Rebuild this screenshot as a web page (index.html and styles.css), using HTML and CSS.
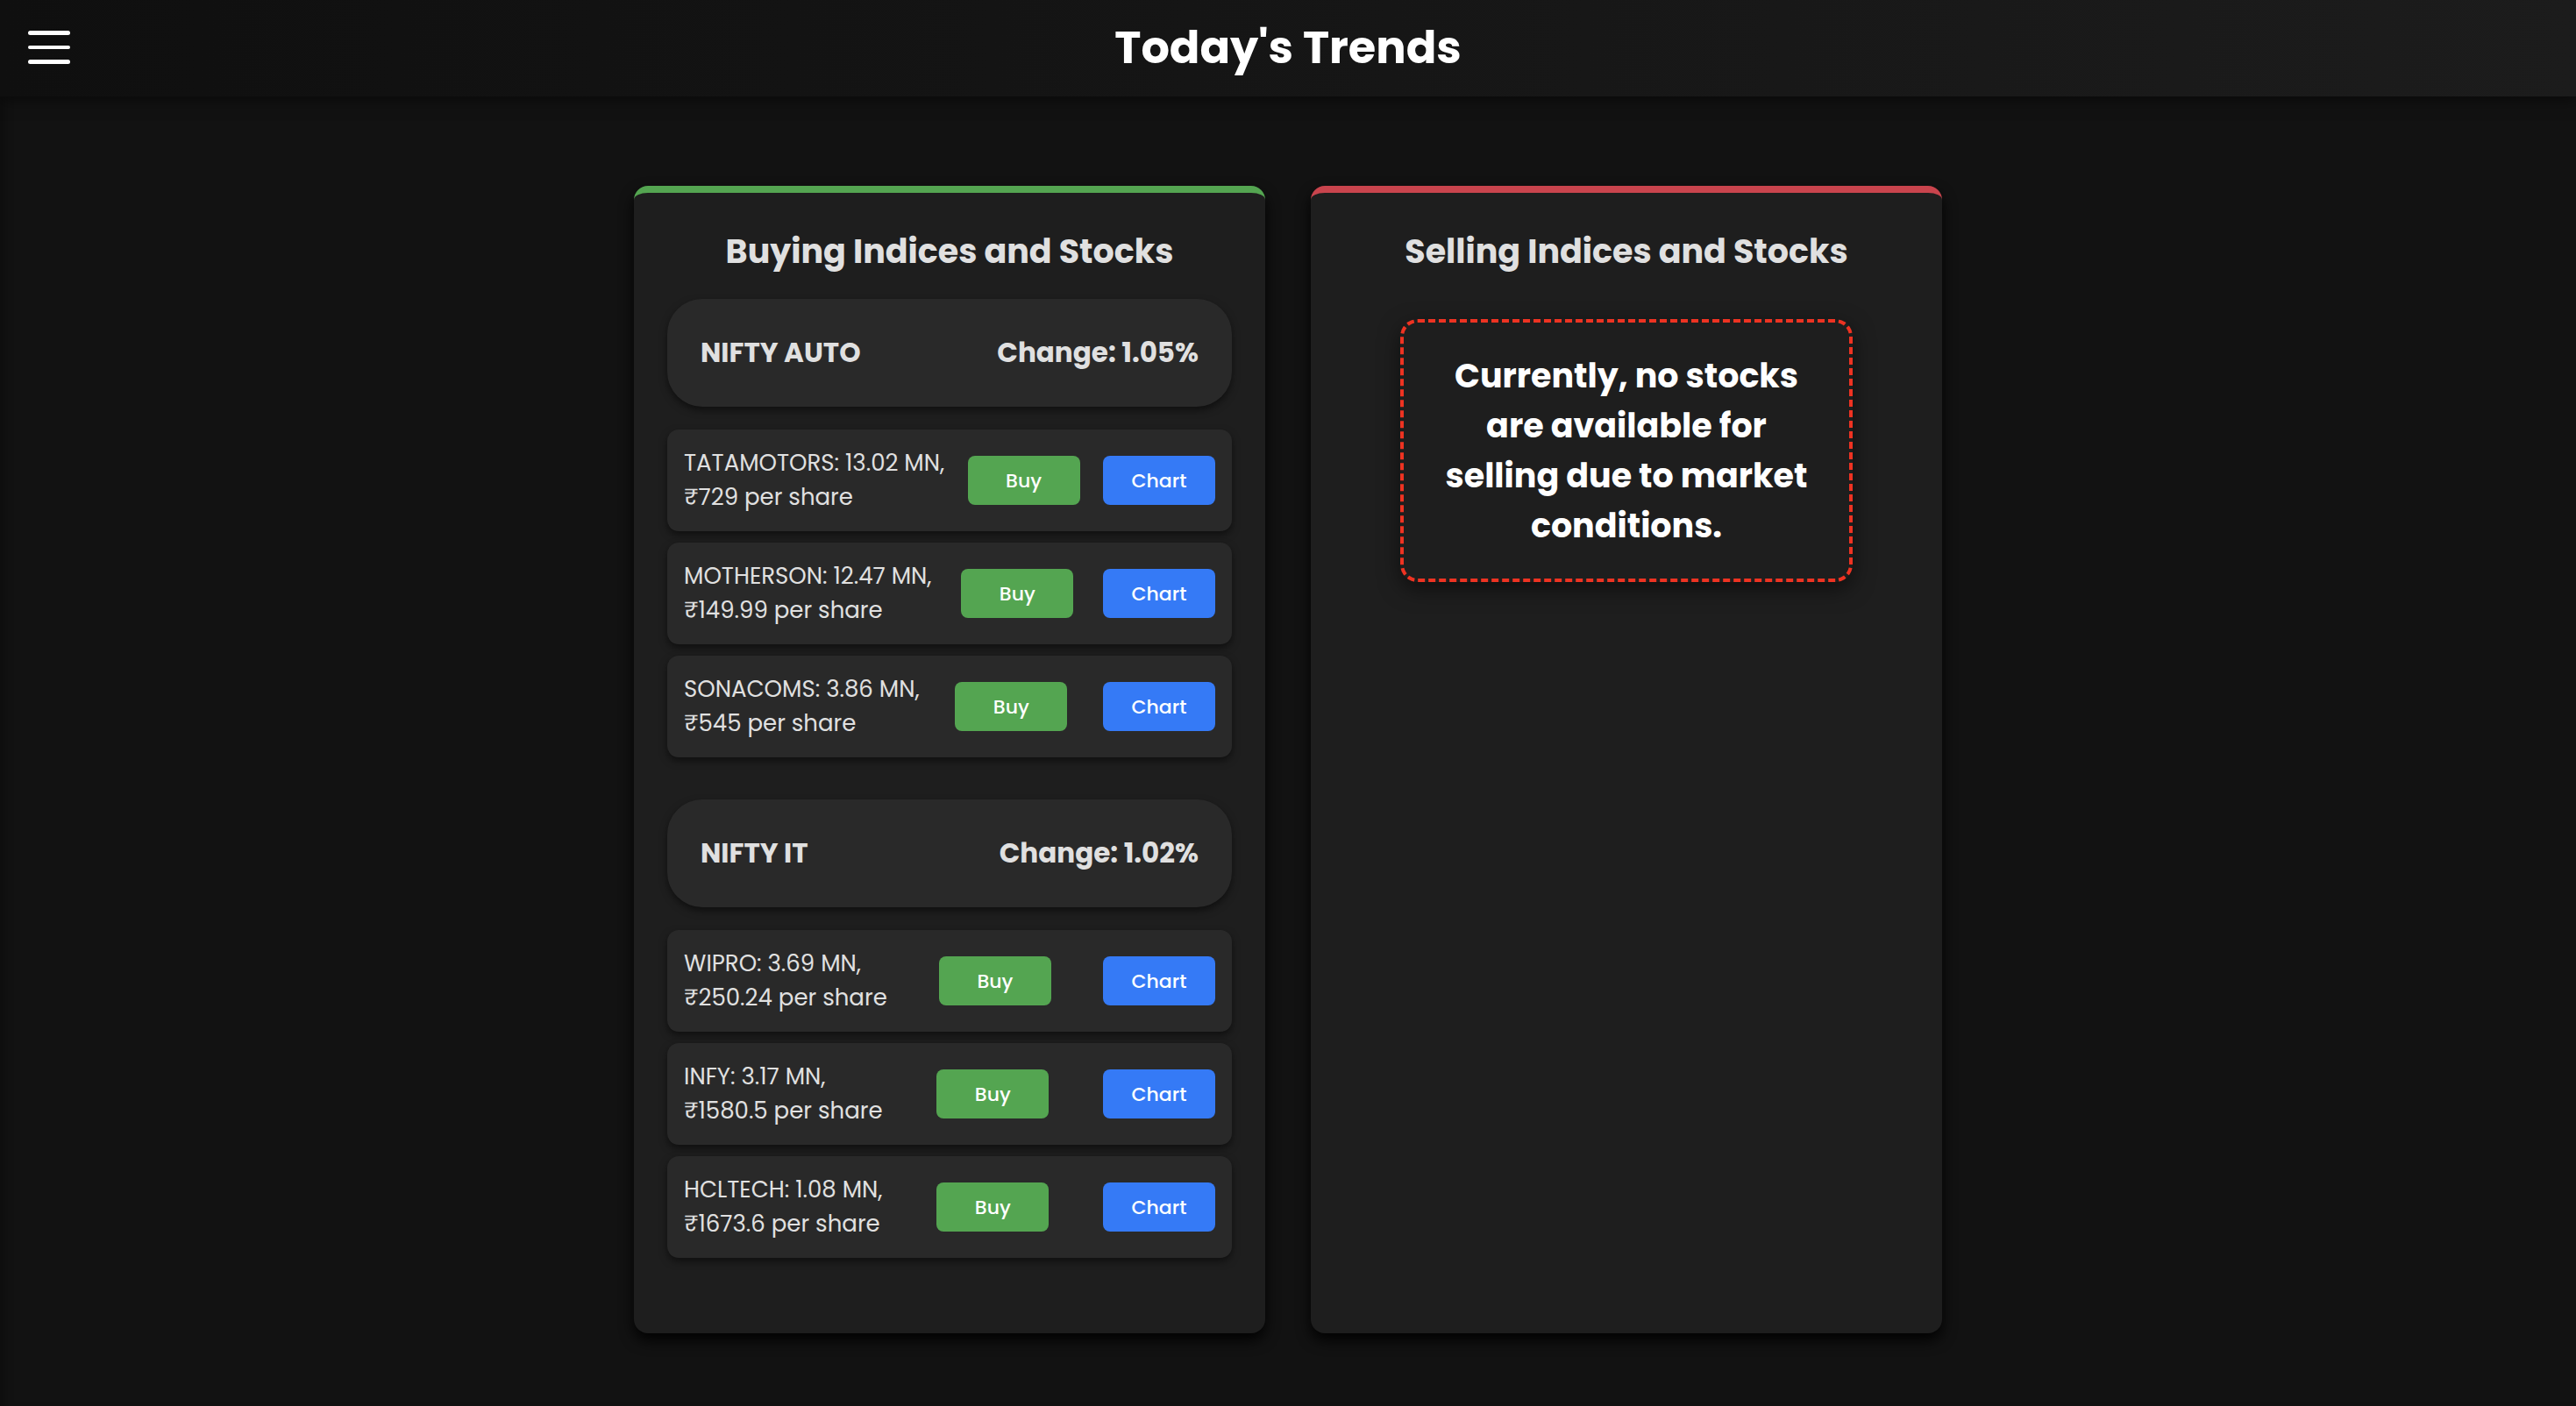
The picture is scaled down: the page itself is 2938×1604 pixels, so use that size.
FILE: index.html
```html
<!DOCTYPE html>
<html lang="en">
<head>
<meta charset="utf-8">
<meta name="viewport" content="width=device-width, initial-scale=1">
<title>Today's Trends</title>
<link rel="stylesheet" href="styles.css">
</head>
<body>
<header class="topbar">
  <button class="menu-toggle" type="button" aria-label="Open menu">
    <svg class="menu-icon" viewBox="0 0 48 38" aria-hidden="true">
      <rect x="0" y="0" width="48" height="5" rx="2.5"/>
      <rect x="0" y="17" width="48" height="4" rx="2"/>
      <rect x="0" y="33" width="48" height="5" rx="2.5"/>
    </svg>
  </button>
  <h1 class="page-title">Today's Trends</h1>
</header>
<main class="board">
  <section class="panel panel-buy">
    <h2 class="panel-title">Buying Indices and Stocks</h2>
    <article class="sector">
      <h3 class="index"><span>NIFTY AUTO</span><span>Change: 1.05%</span></h3>
      <ul class="stocks">
        <li class="stock"><span>TATAMOTORS: 13.02 MN,<br>₹729 per share</span><button class="btn btn-buy" type="button">Buy</button><button class="btn btn-chart" type="button">Chart</button></li>
        <li class="stock"><span>MOTHERSON: 12.47 MN,<br>₹149.99 per share</span><button class="btn btn-buy" type="button">Buy</button><button class="btn btn-chart" type="button">Chart</button></li>
        <li class="stock"><span>SONACOMS: 3.86 MN,<br>₹545 per share</span><button class="btn btn-buy" type="button">Buy</button><button class="btn btn-chart" type="button">Chart</button></li>
      </ul>
    </article>
    <article class="sector">
      <h3 class="index"><span>NIFTY IT</span><span>Change: 1.02%</span></h3>
      <ul class="stocks">
        <li class="stock"><span>WIPRO: 3.69 MN,<br>₹250.24 per share</span><button class="btn btn-buy" type="button">Buy</button><button class="btn btn-chart" type="button">Chart</button></li>
        <li class="stock"><span>INFY: 3.17 MN,<br>₹1580.5 per share</span><button class="btn btn-buy" type="button">Buy</button><button class="btn btn-chart" type="button">Chart</button></li>
        <li class="stock"><span>HCLTECH: 1.08 MN,<br>₹1673.6 per share</span><button class="btn btn-buy" type="button">Buy</button><button class="btn btn-chart" type="button">Chart</button></li>
      </ul>
    </article>
  </section>
  <section class="panel panel-sell">
    <h2 class="panel-title">Selling Indices and Stocks</h2>
    <p class="notice">Currently, no stocks are available for selling due to market conditions.</p>
  </section>
</main>
</body>
</html>
```
FILE: styles.css
```css
* {
  box-sizing: border-box;
}

body {
  margin: 0;
  min-height: 100vh;
  background: #121212;
  color: #e0e0e0;
  font-family: Poppins, Inter, sans-serif;
  font-size: 26px;
  line-height: 39px;
  box-shadow: inset 12px 0 12px -8px rgba(0, 0, 0, 0.3);
}

.topbar {
  display: grid;
  grid-template-columns: 1fr auto 1fr;
  align-items: center;
  height: 110px;
  padding: 0 32px 2px;
  background: linear-gradient(90deg, #0f0f0f, #1c1c1c);
  box-shadow: 0 4px 16px rgba(0, 0, 0, 0.5);
}

.menu-toggle {
  justify-self: start;
  padding: 0;
  border: 0;
  background: none;
  cursor: pointer;
}

.menu-icon {
  display: block;
  width: 48px;
  height: 38px;
  fill: #fff;
}

.page-title {
  margin: 0;
  color: #fff;
  font-size: 51px;
  font-weight: 700;
  line-height: 76px;
}

.board {
  display: flex;
  justify-content: center;
  gap: 52px;
  padding: 102px 32px 80px;
}

.panel {
  flex: 0 1 720px;
  padding: 38px 38px 86px;
  border-top: 8px solid;
  border-radius: 16px;
  background: #1e1e1e;
  box-shadow: 0 8px 16px rgba(0, 0, 0, 0.9);
}

.panel-buy {
  border-top-color: #54a551;
}

.panel-sell {
  border-top-color: #c9444d;
}

.panel-title {
  margin: 0 0 25px;
  font-size: 38px;
  font-weight: 700;
  line-height: 58px;
  text-align: center;
}

.sector + .sector {
  margin-top: 48px;
}

.index {
  display: flex;
  align-items: center;
  justify-content: space-between;
  margin: 0 0 26px;
  padding: 38px;
  border-radius: 40px;
  background: #292929;
  font-size: 31px;
  font-weight: 700;
  line-height: 47px;
  box-shadow: 0 4px 8px rgba(0, 0, 0, 0.5);
}

.stocks {
  display: grid;
  gap: 13px;
  margin: 0;
  padding: 0;
  list-style: none;
}

.stock {
  display: flex;
  align-items: center;
  justify-content: space-between;
  padding: 19px;
  border-radius: 13px;
  background: #292929;
  box-shadow: 0 4px 8px rgba(0, 0, 0, 0.5);
}

.btn {
  width: 128px;
  height: 56px;
  padding: 0;
  border: 0;
  border-radius: 8px;
  color: #fff;
  font: inherit;
  font-size: 22px;
  font-weight: 500;
  cursor: pointer;
}

.btn-buy {
  background: #54a551;
}

.btn-chart {
  background: #357af6;
}

.notice {
  width: 80%;
  margin: 48px auto 0;
  padding: 32px;
  border: 4px dashed #ee3322;
  border-radius: 20px;
  color: #fff;
  font-size: 38px;
  font-weight: 700;
  line-height: 57px;
  text-align: center;
  box-shadow: 0 8px 24px rgba(0, 0, 0, 0.5);
}
```
